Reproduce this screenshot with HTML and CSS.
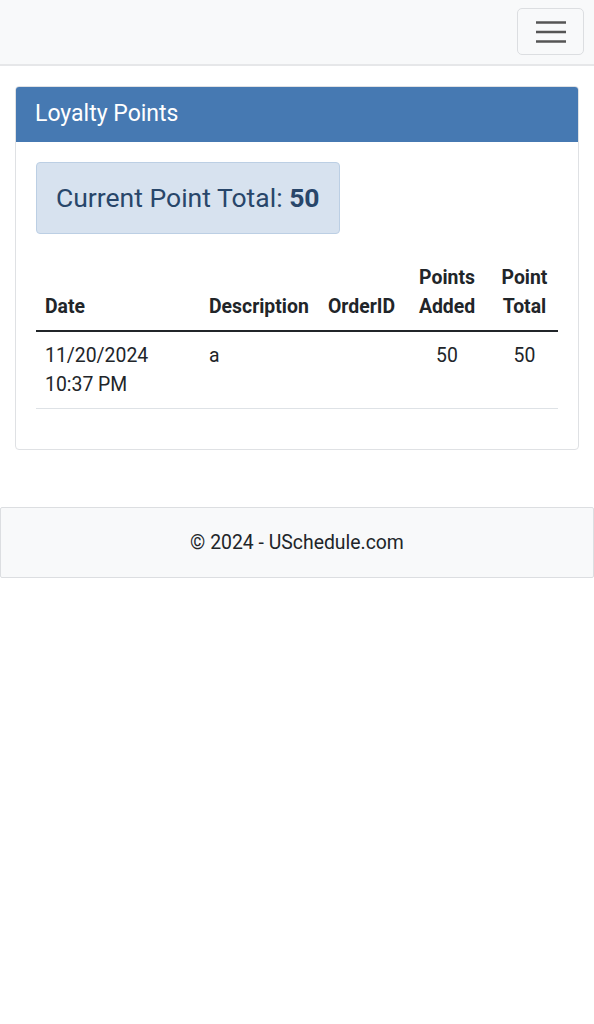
FILE: index.html
```html
<!DOCTYPE html>
<html lang="en">
<head>
<meta charset="utf-8">
<title>Loyalty Points</title>
<link rel="stylesheet" href="styles.css">
</head>
<body>
<nav class="navbar">
  <button class="toggler" aria-label="Toggle navigation">
    <svg width="30" height="22" viewBox="0 0 30 22"><path d="M0 1.5h30M0 11h30M0 20.5h30" stroke="#555" stroke-width="2.5" stroke-linecap="butt"/></svg>
  </button>
</nav>
<main class="container">
  <section class="card">
    <header class="card-header">Loyalty Points</header>
    <div class="card-body">
      <div class="alert">Current Point Total: <strong>50</strong></div>
      <table class="table">
        <thead>
          <tr>
            <th class="c-date">Date</th>
            <th class="c-desc">Description</th>
            <th class="c-order">OrderID</th>
            <th class="c-num c-added">Points Added</th>
            <th class="c-num c-total">Point Total</th>
          </tr>
        </thead>
        <tbody>
          <tr>
            <td>11/20/2024 10:37 PM</td>
            <td>a</td>
            <td></td>
            <td class="c-num">50</td>
            <td class="c-num c-total">50</td>
          </tr>
        </tbody>
      </table>
    </div>
  </section>
</main>
<footer class="footer">© 2024 - USchedule.com</footer>
</body>
</html>
```
FILE: styles.css
```css
* { box-sizing: border-box; }
html, body { margin: 0; padding: 0; }
body {
  font-family: Roboto, "Liberation Sans", sans-serif;
  font-size: 19.4px;
  line-height: 29px;
  color: #212529;
  background: #fff;
}
.navbar {
  height: 66px;
  background: #f8f9fa;
  border-bottom: 2px solid #e6e7e9;
  display: flex;
  justify-content: flex-end;
  align-items: flex-start;
  padding: 8px 10px 0 0;
}
.toggler {
  width: 67px;
  height: 47px;
  border: 1px solid #dcdee1;
  border-radius: 5px;
  background: #f8f9fa;
  display: flex;
  align-items: center;
  justify-content: center;
  padding: 0;
}
.toggler svg { display: block; }
.container {
  padding: 20px 15px 0 15px;
}
.card {
  border: 1px solid #dfe1e4;
  border-radius: 4px;
  overflow: hidden;
}
.card-header {
  background: #4679b2;
  color: #fff;
  font-size: 23px;
  height: 55px;
  line-height: 53px;
  padding: 0 19px;
}
.card-body {
  padding: 20px;
}
.alert {
  display: inline-block;
  background: #d7e2ef;
  border: 1px solid #bccfe4;
  border-radius: 4px;
  color: #28466a;
  font-size: 26.5px;
  line-height: 30px;
  height: 72px;
  padding: 20px 19px;
}
.alert strong { font-weight: 700; }
.table {
  width: 100%;
  border-collapse: collapse;
  margin: 20px 0 20px 0;
}
.table th, .table td {
  padding: 9px 9px;
  vertical-align: bottom;
  text-align: left;
}
.table th {
  font-weight: 700;
  border-bottom: 2px solid #212529;
}
.table td {
  vertical-align: top;
  border-bottom: 1px solid #dee2e6;
}
.table .c-num { text-align: center; }
.table .c-total { padding-left: 13px; padding-right: 7px; }
.c-date { width: 164px; }
.c-desc { width: 119px; }
.c-order { width: 90px; }
.c-added { width: 76px; }
.footer {
  margin-top: 57px;
  height: 71px;
  background: #f8f9fa;
  border: 1px solid #dcdee1;
  border-radius: 2px;
  display: flex;
  align-items: center;
  justify-content: center;
  color: #212529;
}
```
